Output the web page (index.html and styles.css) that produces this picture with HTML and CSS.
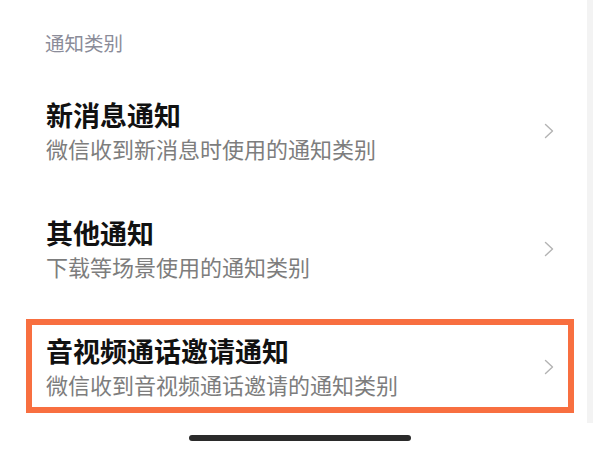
FILE: index.html
```html
<!DOCTYPE html>
<html lang="zh-CN">
<head>
<meta charset="utf-8">
<title>通知类别</title>
<link rel="stylesheet" href="styles.css">
</head>
<body>
<div class="page">
  <div class="section-title">通知类别</div>
  <div class="list">
    <div class="row">
      <div class="texts">
        <div class="title">新消息通知</div>
        <div class="subtitle">微信收到新消息时使用的通知类别</div>
      </div>
      <svg class="chevron" viewBox="0 0 10 16" width="10" height="16"><path d="M1.5 1.5 L8.5 8 L1.5 14.5" fill="none" stroke="#b3b3b3" stroke-width="1.4" stroke-linecap="round" stroke-linejoin="round"/></svg>
    </div>
    <div class="row">
      <div class="texts">
        <div class="title">其他通知</div>
        <div class="subtitle">下载等场景使用的通知类别</div>
      </div>
      <svg class="chevron" viewBox="0 0 10 16" width="10" height="16"><path d="M1.5 1.5 L8.5 8 L1.5 14.5" fill="none" stroke="#b3b3b3" stroke-width="1.4" stroke-linecap="round" stroke-linejoin="round"/></svg>
    </div>
    <div class="row row-marked">
      <div class="texts">
        <div class="title">音视频通话邀请通知</div>
        <div class="subtitle">微信收到音视频通话邀请的通知类别</div>
      </div>
      <svg class="chevron" viewBox="0 0 10 16" width="10" height="16"><path d="M1.5 1.5 L8.5 8 L1.5 14.5" fill="none" stroke="#b3b3b3" stroke-width="1.4" stroke-linecap="round" stroke-linejoin="round"/></svg>
      <div class="highlight"></div>
    </div>
  </div>
  <div class="home-indicator"></div>
  <div class="scroll-strip"></div>
</div>
</body>
</html>
```
FILE: styles.css
```css
html, body {
  margin: 0;
  padding: 0;
  background: #ffffff;
}

.page {
  position: relative;
  width: 600px;
  height: 450px;
  overflow: hidden;
  font-family: "PingFang SC", "Noto Sans CJK SC", "Noto Sans", sans-serif;
}

.section-title {
  padding: 31px 0 0 45px;
  font-size: 19.5px;
  line-height: 24px;
  color: #8b8c99;
  margin-bottom: 17px;
}

.list {
  display: flex;
  flex-direction: column;
}

.row {
  position: relative;
  height: 118px;
  display: flex;
  align-items: center;
  justify-content: space-between;
  padding: 0 46px 0 46px;
  box-sizing: border-box;
}

.texts {
  display: flex;
  flex-direction: column;
}

.title {
  font-size: 27px;
  line-height: 32px;
  font-weight: 600;
  color: #111111;
}

.subtitle {
  margin-top: 1px;
  font-size: 22px;
  line-height: 32px;
  color: #7d7d7d;
}

.chevron {
  display: block;
  flex: none;
}

.highlight {
  position: absolute;
  top: 11px;
  bottom: 13px;
  left: 26px;
  right: 26px;
  border: 6px solid #f86f40;
  box-sizing: border-box;
  pointer-events: none;
}

.home-indicator {
  width: 222px;
  height: 6px;
  border-radius: 3px;
  background: #2b2b2b;
  margin: 9px auto 0;
}

.scroll-strip {
  position: absolute;
  top: 0;
  right: 7px;
  width: 6px;
  height: 423px;
  background: #f3f3f3;
}
```
